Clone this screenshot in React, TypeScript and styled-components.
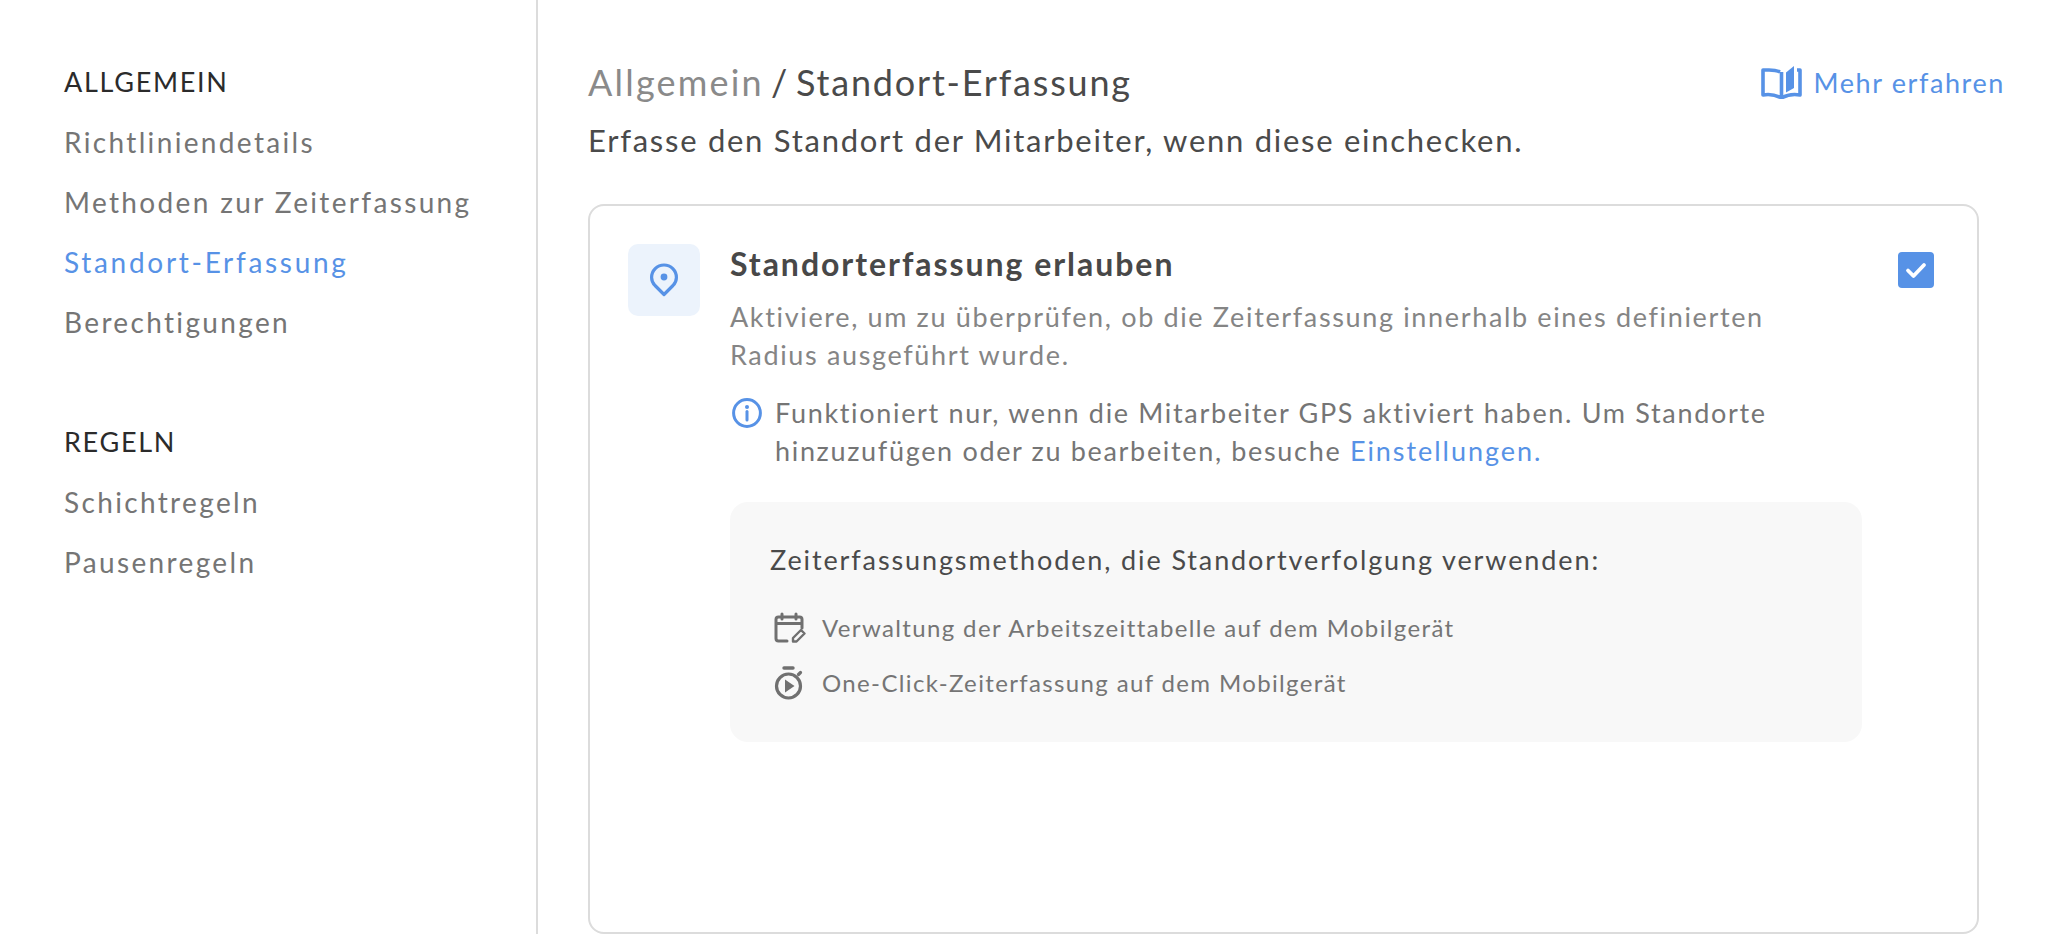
import React from "react";
import styled, { createGlobalStyle } from "styled-components";

const GlobalStyle = createGlobalStyle`
  html, body {
    margin: 0;
    padding: 0;
    height: 100%;
    background: #fff;
    overflow: hidden;
  }
  body {
    font-family: "Lato", "Open Sans", sans-serif;
  }
`;

const Page = styled.div`
  display: flex;
  width: 2066px;
  height: 934px;
  overflow: hidden;
`;

const Sidebar = styled.aside`
  box-sizing: border-box;
  width: 538px;
  height: 934px;
  padding: 64px 0 0 64px;
  border-right: 2px solid #dcdcdc;
  flex-shrink: 0;
`;

const NavGroup = styled.nav`
  display: flex;
  flex-direction: column;
  margin-bottom: 60px;
`;

const NavHeading = styled.div`
  font-size: 27px;
  line-height: 36px;
  height: 60px;
  color: #2b2b2b;
  letter-spacing: 1.7px;
`;

const NavItem = styled.a<{ $active?: boolean }>`
  font-size: 28px;
  line-height: 36px;
  height: 60px;
  letter-spacing: ${(p) => (p.$active ? "2.7px" : "2.35px")};
  color: ${(p) => (p.$active ? "#5792e6" : "#757575")};
`;

const Main = styled.main`
  flex: 1;
  padding: 60px 44px 0 50px;
  min-width: 0;
`;

const TitleRow = styled.div`
  display: flex;
  justify-content: space-between;
  align-items: center;
  height: 44px;
`;

const Breadcrumb = styled.h1`
  margin: 0;
  font-size: 36px;
  line-height: 44px;
  font-weight: 400;
  letter-spacing: 1.8px;
  word-spacing: -4px;
  color: #4a4a4a;
`;

const Crumb = styled.span`
  letter-spacing: 2.2px;
  color: #8a8a8a;
`;

const LearnMore = styled.a`
  display: flex;
  align-items: center;
  gap: 12px;
  margin-right: 17px;
  font-size: 27px;
  letter-spacing: 1.6px;
  color: #5792e6;
`;

const Intro = styled.p`
  margin: 16px 0 0;
  font-size: 31px;
  line-height: 40px;
  letter-spacing: 1.73px;
  color: #4a4a4a;
`;

const Card = styled.section`
  box-sizing: border-box;
  display: flex;
  width: 1391px;
  height: 730px;
  margin-top: 44px;
  padding: 38px 44px 0 38px;
  border: 2px solid #dcdcdc;
  border-radius: 16px;
`;

const IconBox = styled.div`
  display: flex;
  align-items: center;
  justify-content: center;
  flex-shrink: 0;
  width: 72px;
  height: 72px;
  border-radius: 10px;
  background: #ecf3fc;
`;

const CardBody = styled.div`
  flex-shrink: 0;
  width: 1132px;
  margin-left: 30px;
`;

const CardTitle = styled.h2`
  margin: 0;
  font-size: 32px;
  line-height: 40px;
  font-weight: 700;
  letter-spacing: 1.96px;
  color: #484848;
`;

const Description = styled.p`
  width: 1060px;
  margin: 14px 0 0;
  font-size: 27px;
  line-height: 38px;
  letter-spacing: 1.65px;
  color: #858585;
`;

const Notice = styled.div`
  display: flex;
  gap: 13px;
  margin-top: 20px;
  padding-left: 2px;
`;

const NoticeText = styled.p`
  width: 1060px;
  margin: 0;
  font-size: 27px;
  line-height: 38px;
  letter-spacing: 1.67px;
  color: #757575;
`;

const InlineLink = styled.a`
  letter-spacing: 1.95px;
  color: #5792e6;
`;

const MethodsPanel = styled.div`
  box-sizing: border-box;
  height: 240px;
  margin-top: 32px;
  padding: 40px;
  border-radius: 18px;
  background: #f8f8f8;
`;

const MethodsHeading = styled.div`
  font-size: 27px;
  line-height: 36px;
  letter-spacing: 1.88px;
  color: #4a4a4a;
`;

const MethodList = styled.ul`
  display: flex;
  flex-direction: column;
  gap: 22px;
  margin: 33px 0 0;
  padding: 0 0 0 4px;
  list-style: none;
`;

const MethodRow = styled.li`
  display: flex;
  align-items: center;
  gap: 16px;
  height: 33px;
  font-size: 24px;
  letter-spacing: 1.36px;
  color: #757575;
`;

const Check = styled.div`
  display: flex;
  align-items: center;
  justify-content: center;
  flex-shrink: 0;
  width: 36px;
  height: 36px;
  margin: 8px 0 0 36px;
  border-radius: 4px;
  background: #5792e6;
`;

const PinIcon = () => (
  <svg width="28" height="34" viewBox="0 0 28 34" fill="none">
    <path
      d="M14 31.5 5 22.5C2.8 20.2 1.6 17.4 1.6 14.4 1.6 7.5 7.1 2 14 2s12.4 5.5 12.4 12.4c0 3-1.2 5.8-3.4 8.1L14 31.5Z"
      stroke="#5792e6"
      strokeWidth="3.2"
      strokeLinejoin="round"
    />
    <circle cx="14" cy="14" r="3.4" fill="#5792e6" />
  </svg>
);

const InfoIcon = () => (
  <svg width="30" height="30" viewBox="0 0 30 30" fill="none" style={{ marginTop: 4, flexShrink: 0 }}>
    <circle cx="15" cy="15" r="13.4" stroke="#5792e6" strokeWidth="3" />
    <circle cx="15" cy="9" r="2" fill="#5792e6" />
    <path d="M15 13.5v8.5" stroke="#5792e6" strokeWidth="3" strokeLinecap="round" />
  </svg>
);

const BookIcon = () => (
  <svg width="41" height="34" viewBox="0 0 41 34" fill="none">
    <path
      d="M19 7C16 5.500 12 5 8 5H2v25c6-1 12-.5 18.500 3V7"
      stroke="#5792e6"
      strokeWidth="3.6"
      strokeLinejoin="round"
    />
    <path
      d="M20.500 33c6-3.500 12.500-4 18.500-3V5h-3"
      stroke="#5792e6"
      strokeWidth="3.6"
      strokeLinejoin="round"
    />
    <path d="M25 7.500 33 1v22l-8 4.500V7.500Z" fill="#5792e6" />
  </svg>
);

const CheckMark = () => (
  <svg width="22" height="18" viewBox="0 0 22 18" fill="none">
    <path d="M3 9.500 8.500 15 19 4" stroke="#fff" strokeWidth="3.8" strokeLinecap="round" strokeLinejoin="round" />
  </svg>
);

const CalendarIcon = () => (
  <svg width="32" height="32" viewBox="0 0 32 32" fill="none">
    <path
      d="M13 29H4.500C3 29 2 28 2 26.500V7.500C2 6 3 5 4.500 5h21C27 5 28 6 28 7.500V16"
      stroke="#707070"
      strokeWidth="3"
      strokeLinecap="round"
    />
    <path d="M2 11.500h26" stroke="#707070" strokeWidth="3" />
    <path d="M8 2v5M22 2v5" stroke="#707070" strokeWidth="3" strokeLinecap="round" />
    <path d="M19 29.500v-3.500l8-8 3.500 3.500-8 8H19Z" stroke="#707070" strokeWidth="2.4" strokeLinejoin="round" />
  </svg>
);

const TimerIcon = () => (
  <svg width="32" height="34" viewBox="0 0 32 34" fill="none">
    <circle cx="14.500" cy="20" r="12" stroke="#707070" strokeWidth="3.2" />
    <path d="M10 2h9" stroke="#707070" strokeWidth="3.4" strokeLinecap="round" />
    <path d="M24.500 8.500 26.500 6.500" stroke="#707070" strokeWidth="3.2" strokeLinecap="round" />
    <path d="M11 13.500 20.500 20 11 26.500Z" fill="#707070" />
  </svg>
);

const generalItems = ["Richtliniendetails", "Methoden zur Zeiterfassung", "Standort-Erfassung", "Berechtigungen"];
const ruleItems = ["Schichtregeln", "Pausenregeln"];

export default function App() {
  return (
    <Page>
      <GlobalStyle />
      <Sidebar>
        <NavGroup>
          <NavHeading>ALLGEMEIN</NavHeading>
          {generalItems.map((item) => (
            <NavItem key={item} $active={item === "Standort-Erfassung"}>
              {item}
            </NavItem>
          ))}
        </NavGroup>
        <NavGroup>
          <NavHeading>REGELN</NavHeading>
          {ruleItems.map((item) => (
            <NavItem key={item}>{item}</NavItem>
          ))}
        </NavGroup>
      </Sidebar>
      <Main>
        <TitleRow>
          <Breadcrumb>
            <Crumb>Allgemein</Crumb> / Standort-Erfassung
          </Breadcrumb>
          <LearnMore>
            <BookIcon />
            Mehr erfahren
          </LearnMore>
        </TitleRow>
        <Intro>Erfasse den Standort der Mitarbeiter, wenn diese einchecken.</Intro>
        <Card>
          <IconBox>
            <PinIcon />
          </IconBox>
          <CardBody>
            <CardTitle>Standorterfassung erlauben</CardTitle>
            <Description>
              Aktiviere, um zu überprüfen, ob die Zeiterfassung innerhalb eines definierten Radius ausgeführt wurde.
            </Description>
            <Notice>
              <InfoIcon />
              <NoticeText>
                Funktioniert nur, wenn die Mitarbeiter GPS aktiviert haben. Um Standorte hinzuzufügen oder zu
                bearbeiten, besuche <InlineLink>Einstellungen.</InlineLink>
              </NoticeText>
            </Notice>
            <MethodsPanel>
              <MethodsHeading>Zeiterfassungsmethoden, die Standortverfolgung verwenden:</MethodsHeading>
              <MethodList>
                <MethodRow>
                  <CalendarIcon />
                  Verwaltung der Arbeitszeittabelle auf dem Mobilgerät
                </MethodRow>
                <MethodRow>
                  <TimerIcon />
                  One-Click-Zeiterfassung auf dem Mobilgerät
                </MethodRow>
              </MethodList>
            </MethodsPanel>
          </CardBody>
          <Check>
            <CheckMark />
          </Check>
        </Card>
      </Main>
    </Page>
  );
}
